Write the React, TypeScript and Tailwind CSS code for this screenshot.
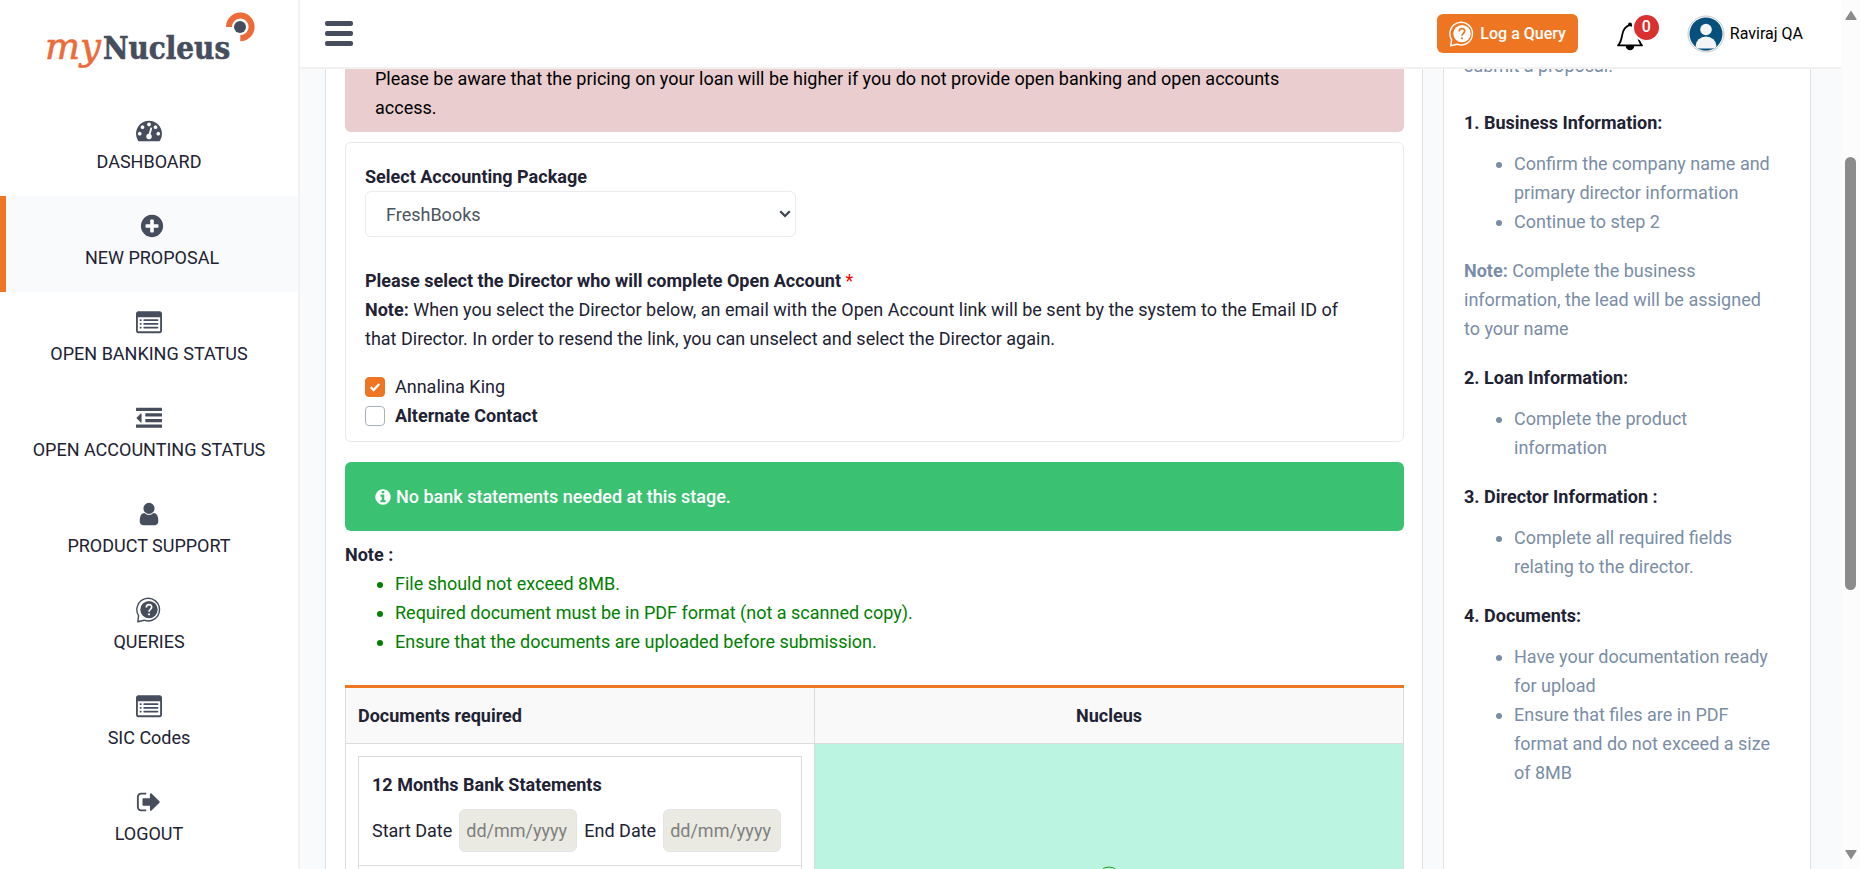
import React from "react";

const CIRCLE =
  "m0 0q0 209-103 385.5t-279.5 279.5-385.5 103-385.5-103-279.5-279.5-103-385.5 103-385.5 279.5-279.5 385.5-103 385.5 103 279.5 279.5 103 385.5z";

type IconProps = { className?: string };

function Glyph({ className, children }: IconProps & { children: React.ReactNode }) {
  return (
    <svg viewBox="0 0 1792 1792" className={className} fill="currentColor" fillRule="evenodd" aria-hidden="true">
      {children}
    </svg>
  );
}

function GaugeIcon({ className }: IconProps) {
  return (
    <Glyph className={className}>
      <path d="M384 1152q0-53-37.5-90.5t-90.5-37.5-90.5 37.5-37.5 90.5 37.5 90.5 90.5 37.5 90.5-37.5 37.5-90.5zm192-448q0-53-37.5-90.5t-90.5-37.5-90.5 37.5-37.5 90.5 37.5 90.5 90.5 37.5 90.5-37.5 37.5-90.5zm428 481l101-382q6-26-7.5-48.5t-38.5-29.5-48 6.5-30 39.5l-101 382q-60 5-107 43.5t-63 98.5q-20 77 20 146t117 89 146-20 89-117q16-60-6-117t-72-91zm660-33q0-53-37.5-90.5t-90.5-37.5-90.5 37.5-37.5 90.5 37.5 90.5 90.5 37.5 90.5-37.5 37.5-90.5zm-640-640q0-53-37.5-90.5t-90.5-37.5-90.5 37.5-37.5 90.5 37.5 90.5 90.5 37.5 90.5-37.5 37.5-90.5zm448 192q0-53-37.5-90.5t-90.5-37.5-90.5 37.5-37.5 90.5 37.5 90.5 90.5 37.5 90.5-37.5 37.5-90.5zm320 448q0 261-141 483-19 29-54 29h-1402q-35 0-54-29-141-221-141-483 0-182 71-348t191-286 286-191 348-71 348 71 286 191 191 286 71 348z" />
    </Glyph>
  );
}

function PlusCircleIcon({ className }: IconProps) {
  return (
    <Glyph className={className}>
      <path d={"M1344 960v-128q0-26-19-45t-45-19h-256v-256q0-26-19-45t-45-19h-128q-26 0-45 19t-19 45v256h-256q-26 0-45 19t-19 45v128q0 26 19 45t45 19h256v256q0 26 19 45t45 19h128q26 0 45-19t19-45v-256h256q26 0 45-19t19-45zM1664 896" + CIRCLE} />
    </Glyph>
  );
}

function InfoCircleIcon({ className }: IconProps) {
  return (
    <Glyph className={className}>
      <path d={"M1152 1376v-160q0-14-9-23t-23-9h-96v-512q0-14-9-23t-23-9h-320q-14 0-23 9t-9 23v160q0 14 9 23t23 9h96v320h-96q-14 0-23 9t-9 23v160q0 14 9 23t23 9h448q14 0 23-9t9-23zm-128-896v-160q0-14-9-23t-23-9h-192q-14 0-23 9t-9 23v160q0 14 9 23t23 9h192q14 0 23-9t9-23zM1664 896" + CIRCLE} />
    </Glyph>
  );
}

function ListAltIcon({ className }: IconProps) {
  return (
    <Glyph className={className}>
      <path d="M160 160h1472q66 0 113 47t47 113v1184q0 66-47 113t-113 47h-1472q-66 0-113-47t-47-113v-1184q0-66 47-113t113-47zM128 576v928q0 32 32 32h1472q32 0 32-32v-928z" />
      {[704, 960, 1216].map((y) => (
        <g key={y}>
          <rect x="256" y={y} width="128" height="128" rx="30" />
          <rect x="512" y={y} width="1024" height="128" rx="30" />
        </g>
      ))}
    </Glyph>
  );
}

function OutdentIcon({ className }: IconProps) {
  return (
    <Glyph className={className}>
      <path d="M384 608v576q0 13-9.5 22.5t-22.5 9.5q-14 0-23-9l-288-288q-9-9-9-23t9-23l288-288q9-9 23-9 13 0 22.5 9.5t9.5 22.5z" />
      <rect x="0" y="192" width="1792" height="224" rx="24" />
      <rect x="640" y="576" width="1152" height="224" rx="24" />
      <rect x="640" y="960" width="1152" height="224" rx="24" />
      <rect x="0" y="1344" width="1792" height="224" rx="24" />
    </Glyph>
  );
}

function UserIcon({ className }: IconProps) {
  return (
    <Glyph className={className}>
      <path d="M1536 1399q0 109-62.5 187t-150.5 78h-854q-88 0-150.5-78t-62.5-187q0-85 8.5-160.5t31.5-152 58.5-131 94-89 134.5-34.5q131 128 313 128t313-128q76 0 134.5 34.5t94 89 58.5 131 31.5 152 8.5 160.5zm-256-887q0 159-112.5 271.5t-271.5 112.5-271.5-112.5-112.5-271.5 112.5-271.5 271.5-112.5 271.5 112.5 112.5 271.5z" />
    </Glyph>
  );
}

function SignOutIcon({ className }: IconProps) {
  return (
    <Glyph className={className}>
      <path d="M704 1440q0 4 1 20t.5 26.5-3 23.5-10 19.5-20.5 6.5h-320q-119 0-203.5-84.5t-84.5-203.5v-704q0-119 84.5-203.5t203.5-84.5h320q13 0 22.5 9.5t9.5 22.5q0 4 1 20t.5 26.5-3 23.5-10 19.5-20.5 6.5h-320q-66 0-113 47t-47 113v704q0 66 47 113t113 47h312l11.5 1 11.5 3 8 5.5 7 9 2 13.5zm928-544q0 26-19 45l-544 544q-19 19-45 19t-45-19-19-45v-288h-448q-26 0-45-19t-19-45v-384q0-26 19-45t45-19h448v-288q0-26 19-45t45-19 45 19l544 544q19 19 19 45z" />
    </Glyph>
  );
}

function QueryIcon({ className, mark }: IconProps & { mark: string }) {
  return (
    <svg viewBox="0 0 26 26" className={className} fill="none" aria-hidden="true">
      <path d="M1.8 24.8 L2.6 18.6 A11.3 11.3 0 1 1 8.2 23.2 Z" stroke="currentColor" strokeWidth="1.4" strokeLinejoin="round" />
      <circle cx="13" cy="12.6" r="8.7" fill="currentColor" />
      <path d="M10.3 10.6 C10.3 6.6 15.7 6.6 15.7 10.1 C15.7 12.4 13 12.4 13 14.8" stroke={mark} strokeWidth="1.7" />
      <circle cx="13" cy="17.3" r="1.1" fill={mark} />
    </svg>
  );
}

function SidebarQueryIcon({ className }: IconProps) {
  return <QueryIcon className={className} mark="#ffffff" />;
}

function BellIcon() {
  return (
    <svg viewBox="0 0 28 30" className="h-[30px] w-7" fill="none" aria-hidden="true">
      <path d="M2 24.3 C5 21.6 5.4 18 6.2 14 C7 9 8.6 5.4 14 3.8 C19.4 5.4 21 9 21.8 14 C22.6 18 23 21.6 26 24.3 Z" stroke="#000000" strokeWidth="1.8" strokeLinejoin="round" />
      <circle cx="14" cy="3.4" r="1.9" fill="#000000" />
      <path d="M9.8 25 h8.4 a4.2 4.3 0 0 1 -8.4 0z" fill="#000000" />
    </svg>
  );
}

function Logo() {
  return (
    <a href="#home" aria-label="myNucleus" className="flex h-[69px] w-[298px] items-start">
      <svg viewBox="0 0 298 69" className="h-[69px] w-[298px]">
        <text x="45" y="59" fill="#ec6b38" stroke="#ec6b38" strokeWidth="0.6" fontFamily="'DejaVu Serif',serif" fontStyle="italic" fontSize="37">my</text>
        <text x="103" y="59" fill="#464d5d" stroke="#464d5d" strokeWidth="0.6" fontFamily="'DejaVu Serif Condensed','DejaVu Serif',serif" fontWeight="700" fontSize="31">Nucleus</text>
        <path d="M229 27 A11.3 11.3 0 1 1 240.3 38.2" fill="none" stroke="#ec6b38" strokeWidth="6" />
        <circle cx="240" cy="27" r="6" fill="#464d5d" />
      </svg>
    </a>
  );
}

const NAV = [
  { label: "DASHBOARD", Icon: GaugeIcon, active: false },
  { label: "NEW PROPOSAL", Icon: PlusCircleIcon, active: true },
  { label: "OPEN BANKING STATUS", Icon: ListAltIcon, active: false },
  { label: "OPEN ACCOUNTING STATUS", Icon: OutdentIcon, active: false },
  { label: "PRODUCT SUPPORT", Icon: UserIcon, active: false },
  { label: "QUERIES", Icon: SidebarQueryIcon, active: false },
  { label: "SIC Codes", Icon: ListAltIcon, active: false },
  { label: "LOGOUT", Icon: SignOutIcon, active: false },
];

function Sidebar() {
  return (
    <aside className="w-[300px] shrink-0 overflow-hidden border-r-2 border-[#f1f2f4] bg-white">
      <Logo />
      <nav className="mt-[31px] flex flex-col">
        {NAV.map(({ label, Icon, active }) => (
          <a
            key={label}
            href="#nav"
            className={
              active
                ? "flex h-24 flex-col items-center border-l-6 border-[#ee7623] bg-[#f9fafc] pt-[17px]"
                : "flex h-24 flex-col items-center pt-[17px]"
            }
          >
            <Icon className="size-[26px] text-[#464d5d]" />
            <span className="mt-1 text-lg leading-[29px] text-[#212233]">{label}</span>
          </a>
        ))}
      </nav>
    </aside>
  );
}

function Header() {
  return (
    <header className="flex h-[69px] shrink-0 items-center justify-between border-b-2 border-[#f1f1f1] bg-white pr-[38px] pl-[25px]">
      <button type="button" aria-label="Toggle menu" className="flex w-7 flex-col gap-[5px]">
        <span className="h-[5px] rounded-xs bg-[#464d5d]" />
        <span className="h-[5px] rounded-xs bg-[#464d5d]" />
        <span className="h-[5px] rounded-xs bg-[#464d5d]" />
      </button>
      <div className="flex items-center">
        <button type="button" className="flex h-[39px] items-center gap-[5px] rounded-md bg-[#ee7623] px-3 text-base font-medium text-white">
          <QueryIcon className="size-[26px]" mark="#ee7623" />
          Log a Query
        </button>
        <button type="button" aria-label="Notifications" className="relative mt-1 ml-[38px]">
          <BellIcon />
          <span className="absolute -top-1.5 left-[18px] flex size-[25px] items-center justify-center rounded-full bg-[#d93030] text-base font-medium text-white ring-2 ring-white">
            0
          </span>
        </button>
        <a href="#profile" className="ml-[43px] flex items-center gap-[5px] text-base text-black">
          <svg viewBox="0 0 38 38" className="size-[38px]" aria-hidden="true">
            <circle cx="19" cy="19" r="18" fill="#ffffff" stroke="#c4c6c8" />
            <clipPath id="avatar">
              <circle cx="19" cy="19" r="16.5" />
            </clipPath>
            <g clipPath="url(#avatar)">
              <rect width="38" height="38" fill="#05507c" />
              <circle cx="19" cy="14.5" r="5.8" fill="#f3f4f6" />
              <ellipse cx="19" cy="30.5" rx="10.3" ry="9" fill="#f3f4f6" />
              <path d="M6 33.6 h26 v5 h-26z" fill="#05507c" />
            </g>
          </svg>
          Raviraj QA
        </a>
      </div>
    </header>
  );
}

function AccountingCard() {
  return (
    <section className="mt-2.5 rounded-md border border-[#e6eaf2] px-[19px] pt-[19px] pb-[11px]">
      <label htmlFor="package" className="block font-bold">Select Accounting Package</label>
      <div className="grid w-[431px] items-center">
        <select id="package" defaultValue="FreshBooks" className="col-start-1 row-start-1 h-[46px] appearance-none rounded-md border border-[#e9ebee] bg-white px-5 text-[#4a5560]">
          <option>FreshBooks</option>
        </select>
        <svg viewBox="0 0 12 8" className="pointer-events-none col-start-1 row-start-1 mr-[5px] h-2 w-3 justify-self-end" fill="none" aria-hidden="true">
          <path d="M1.2 1.2 L6 6 L10.8 1.2" stroke="#3c4250" strokeWidth="2.2" />
        </svg>
      </div>
      <p className="mt-[29px] font-bold">
        Please select the Director who will complete Open Account <span className="font-normal text-[#ff0000]">*</span>
      </p>
      <p className="pr-5">
        <strong>Note:</strong> When you select the Director below, an email with the Open Account link will be sent by the system to the Email ID of that Director. In order to resend the link, you can unselect and select the Director again.
      </p>
      <div className="mt-[19px]">
        <label className="flex items-center gap-2.5">
          <span className="grid size-5">
            <input type="checkbox" defaultChecked className="peer col-start-1 row-start-1 size-5 appearance-none rounded border border-[#a9b1bf] bg-white checked:border-[#ee7623] checked:bg-[#ee7623]" />
            <svg viewBox="0 0 20 20" className="pointer-events-none col-start-1 row-start-1 size-5 opacity-0 peer-checked:opacity-100" fill="none" aria-hidden="true">
              <path d="M5.8 10.2 L8.6 13 L14.2 7" stroke="#ffffff" strokeWidth="2.4" />
            </svg>
          </span>
          Annalina King
        </label>
        <label className="flex items-center gap-2.5 font-bold">
          <input type="checkbox" className="size-5 appearance-none rounded border border-[#a9b1bf] bg-white" />
          Alternate Contact
        </label>
      </div>
    </section>
  );
}

function DateField({ id, label }: { id: string; label: string }) {
  return (
    <>
      <label htmlFor={id}>{label}</label>
      <input id={id} placeholder="dd/mm/yyyy" className="h-[43px] w-[118px] rounded-md border border-[#e2e4e6] bg-[#eaeae3] px-1.5 placeholder:text-[#7f7f7f]" />
    </>
  );
}

function DocumentsTable() {
  return (
    <table className="mt-[29px] w-full table-fixed border-collapse">
      <thead>
        <tr className="h-[57px] border-t-3 border-t-[#ee7623] bg-[#f9f9f9]">
          <th scope="col" className="w-[469px] border border-t-0 border-[#dcdcdc] px-3 text-left font-bold">Documents required</th>
          <th scope="col" className="border border-t-0 border-[#dcdcdc] px-3 text-center font-bold">Nucleus</th>
        </tr>
      </thead>
      <tbody>
        <tr>
          <td className="border border-[#dcdcdc] p-3 align-top">
            <div className="border border-[#dcdcdc]">
              <div className="border-b border-[#dcdcdc] p-[13px]">
                <p className="font-bold">12 Months Bank Statements</p>
                <div className="mt-2.5 flex items-center gap-[7px]">
                  <DateField id="start-date" label="Start Date" />
                  <DateField id="end-date" label="End Date" />
                </div>
              </div>
              <div className="h-[132px]" />
            </div>
          </td>
          <td className="border border-[#dcdcdc] bg-[#bbf4e1]">
            <svg viewBox="0 0 24 24" className="mx-auto size-6" fill="none" stroke="#1fa01f" aria-hidden="true">
              <circle cx="12" cy="12" r="11" />
              <path d="M7 12.5 L10.5 16 L17 9" />
            </svg>
          </td>
        </tr>
      </tbody>
    </table>
  );
}

function ProposalForm() {
  return (
    <main className="min-w-0 grow border-x border-[#dfe2e6] bg-white pr-[18px] pl-[19px]">
      <div className="-mt-[5px] rounded-b-md bg-[#e9cdcf] pr-[60px] pb-2.5 pl-[30px] text-black">
        Please be aware that the pricing on your loan will be higher if you do not provide open banking and open accounts
        access.
      </div>
      <AccountingCard />
      <div className="mt-5 flex items-center gap-1 rounded-md bg-[#3ac272] px-[29px] py-5 font-medium text-white">
        <InfoCircleIcon className="size-[18px]" />
        No bank statements needed at this stage.
      </div>
      <p className="mt-[9px] font-bold">Note :</p>
      <ul className="list-disc pl-[50px] text-[#008000]">
        <li>File should not exceed 8MB.</li>
        <li>Required document must be in PDF format (not a scanned copy).</li>
        <li>Ensure that the documents are uploaded before submission.</li>
      </ul>
      <DocumentsTable />
    </main>
  );
}

function GuideSection({ title, items, children }: { title: string; items: string[]; children?: React.ReactNode }) {
  return (
    <section className="mb-5">
      <h2 className="mb-3 font-bold text-[#212233]">{title}</h2>
      <ul className="list-disc pl-[50px]">
        {items.map((item) => (
          <li key={item}>{item}</li>
        ))}
      </ul>
      {children}
    </section>
  );
}

function Guide() {
  return (
    <aside className="w-[368px] shrink-0 border-x border-[#dfe2e6] bg-white pr-8 pl-5 text-[#7a8da6]">
      <p className="-mt-[18px] mb-7">submit a proposal.</p>
      <GuideSection title="1. Business Information:" items={["Confirm the company name and primary director information", "Continue to step 2"]}>
        <p className="mt-5">
          <strong>Note:</strong> Complete the business information, the lead will be assigned to your name
        </p>
      </GuideSection>
      <GuideSection title="2. Loan Information:" items={["Complete the product information"]} />
      <GuideSection title="3. Director Information :" items={["Complete all required fields relating to the director."]} />
      <GuideSection title="4. Documents:" items={["Have your documentation ready for upload", "Ensure that files are in PDF format and do not exceed a size of 8MB"]} />
    </aside>
  );
}

function ScrollTrack() {
  return (
    <div className="flex w-[19px] shrink-0 flex-col items-center bg-[#fcfcfc] pt-2.5 pb-[9px]" aria-hidden="true">
      <svg viewBox="0 0 12 10" className="h-2.5 w-3" fill="#8b8b8b">
        <path d="M6 0.5 L11.5 9 Q11.8 10 11 10 H1 Q0.2 10 0.5 9 Z" />
      </svg>
      <div className="flex w-full grow flex-col items-center">
        <div className="h-[137px] shrink-0" />
        <div className="h-[433px] w-[11px] rounded-full bg-[#8b8b8b]" />
      </div>
      <svg viewBox="0 0 12 10" className="h-2.5 w-3" fill="#8b8b8b">
        <path d="M6 9.5 L11.5 1 Q11.8 0 11 0 H1 Q0.2 0 0.5 1 Z" />
      </svg>
    </div>
  );
}

export default function App() {
  return (
    <div className="flex h-screen overflow-hidden bg-[#f9fafc] font-[Roboto,sans-serif] text-lg leading-[29px] text-[#212233]">
      <Sidebar />
      <div className="flex min-w-0 grow flex-col">
        <Header />
        <div className="flex min-h-0 grow gap-5 overflow-hidden pr-[30px] pl-[25px]">
          <ProposalForm />
          <Guide />
        </div>
      </div>
      <ScrollTrack />
    </div>
  );
}
